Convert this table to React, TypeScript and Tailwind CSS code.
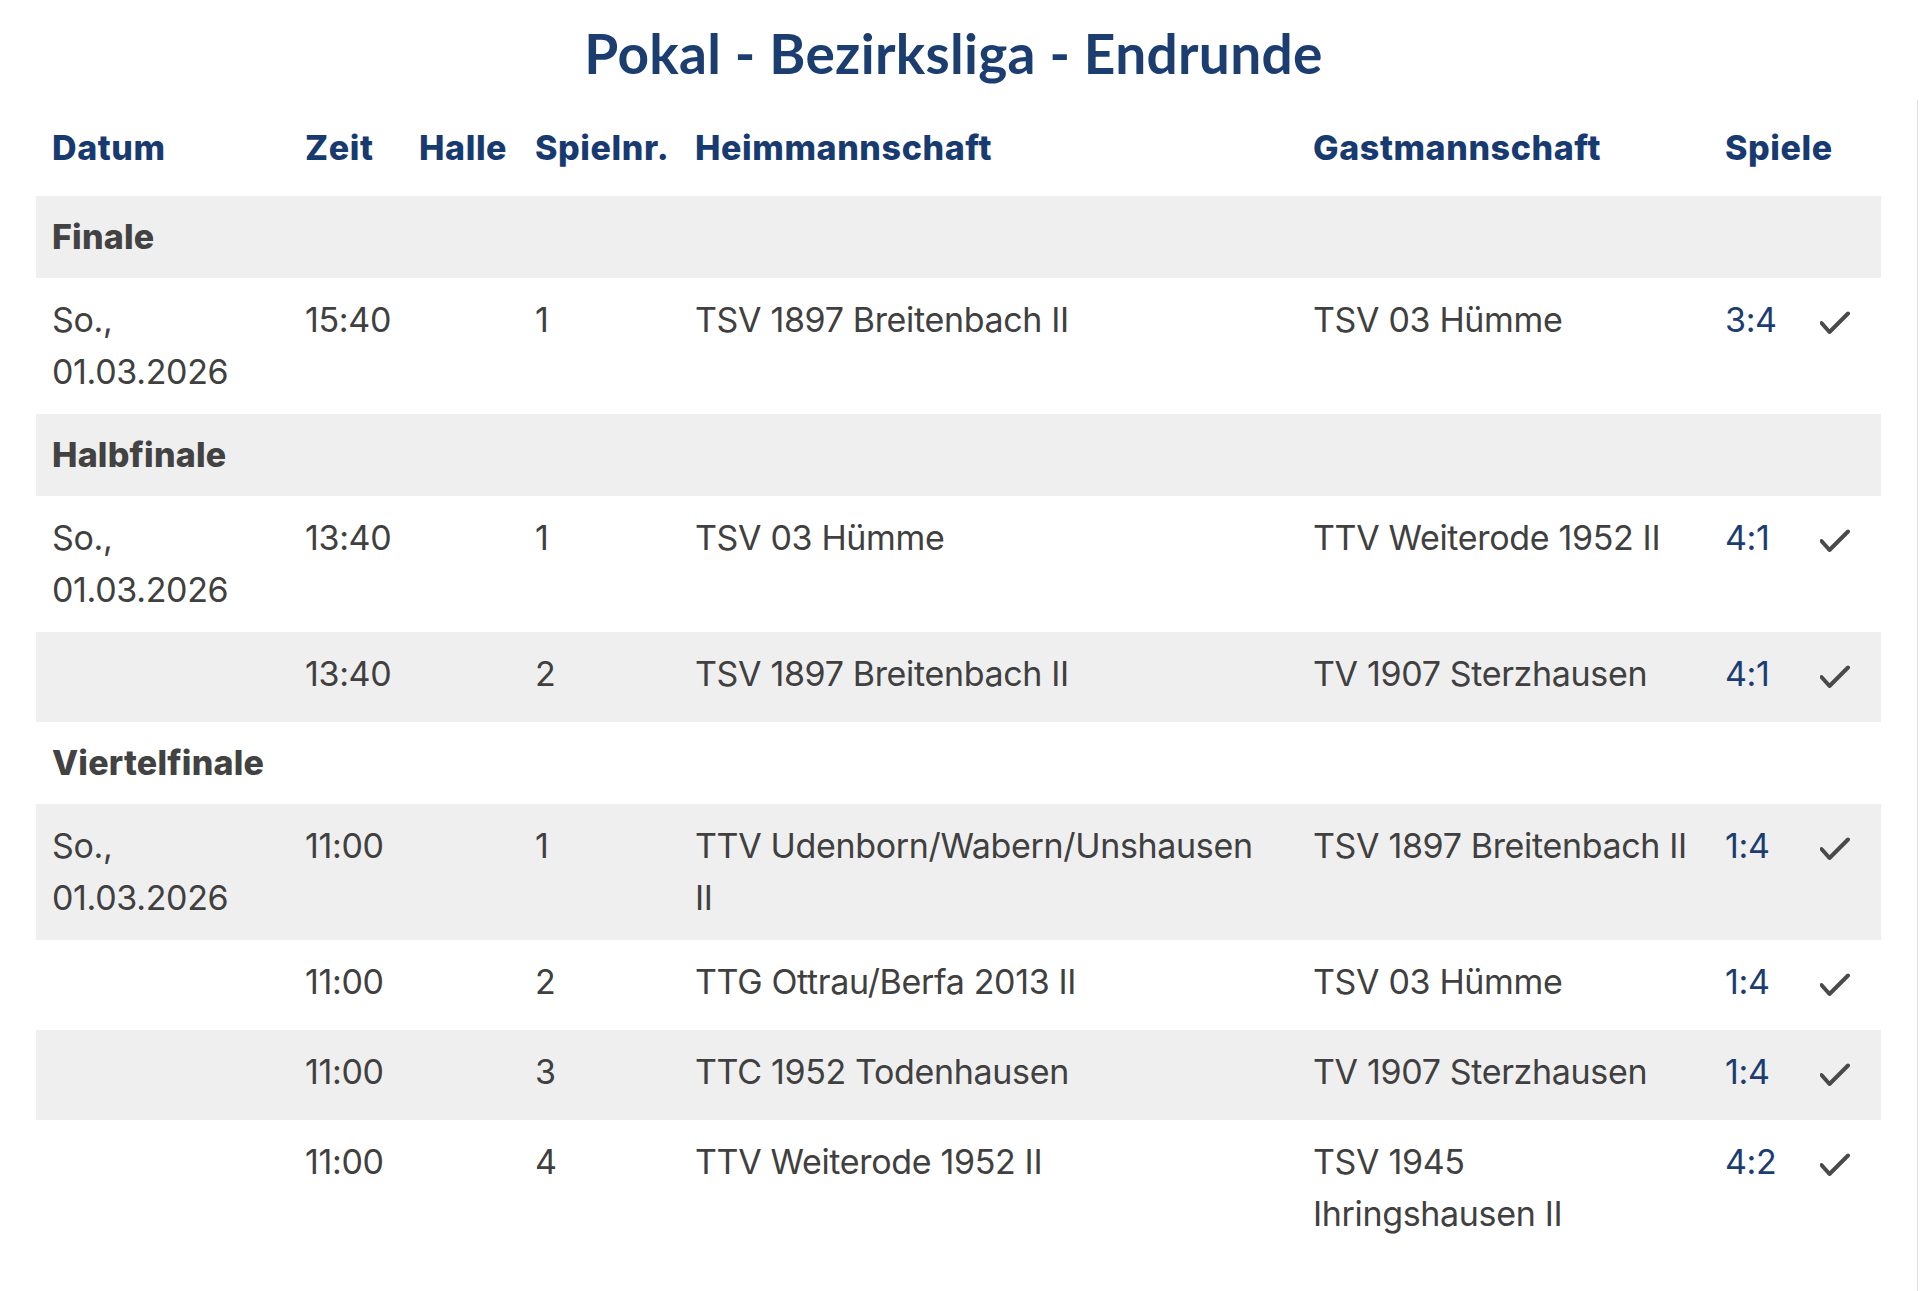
import React from "react";

type Match = {
  date?: string;
  time: string;
  nr: string;
  home: string;
  guest: string;
  score: string;
};

type Round = { name: string; matches: Match[] };

const rounds: Round[] = [
  {
    name: "Finale",
    matches: [
      { date: "So., 01.03.2026", time: "15:40", nr: "1", home: "TSV 1897 Breitenbach II", guest: "TSV 03 Hümme", score: "3:4" },
    ],
  },
  {
    name: "Halbfinale",
    matches: [
      { date: "So., 01.03.2026", time: "13:40", nr: "1", home: "TSV 03 Hümme", guest: "TTV Weiterode 1952 II", score: "4:1" },
      { time: "13:40", nr: "2", home: "TSV 1897 Breitenbach II", guest: "TV 1907 Sterzhausen", score: "4:1" },
    ],
  },
  {
    name: "Viertelfinale",
    matches: [
      { date: "So., 01.03.2026", time: "11:00", nr: "1", home: "TTV Udenborn/Wabern/Unshausen II", guest: "TSV 1897 Breitenbach II", score: "1:4" },
      { time: "11:00", nr: "2", home: "TTG Ottrau/Berfa 2013 II", guest: "TSV 03 Hümme", score: "1:4" },
      { time: "11:00", nr: "3", home: "TTC 1952 Todenhausen", guest: "TV 1907 Sterzhausen", score: "1:4" },
      { time: "11:00", nr: "4", home: "TTV Weiterode 1952 II", guest: "TSV 1945 Ihringshausen II", score: "4:2" },
    ],
  },
];

const GRID = "grid grid-cols-[253px_114px_116px_160px_618px_412px_97px_75px]";

function Check() {
  return (
    <svg width="30" height="24" viewBox="0 0 30 24" fill="none" stroke="#4a4a4a" strokeWidth="4" strokeLinecap="round" strokeLinejoin="round">
      <polyline points="1.5,12 9.5,21 28,2.5" />
    </svg>
  );
}

export default function App() {
  // flatten rounds into rows so the stripes alternate across the whole table
  const rows: ({ kind: "round"; name: string } | { kind: "match"; m: Match })[] = [];
  rounds.forEach((r) => {
    rows.push({ kind: "round", name: r.name });
    r.matches.forEach((m) => rows.push({ kind: "match", m }));
  });

  return (
    <div className="flex min-h-screen bg-white font-['Inter',sans-serif]">
      <div className="flex-1">
        <h1 className="h-[100px] pt-[20px] pr-[10px] text-center font-['Lato',sans-serif] text-[55px] font-bold leading-[1.2] tracking-[0.3px] text-[#1c3d70]">
          Pokal - Bezirksliga - Endrunde
        </h1>

        <div className="ml-[36px] w-[1845px] text-[34px] leading-[52px] tracking-[-0.01em]">
          <div className={`${GRID} py-[22px] font-extrabold tracking-[0.6px] text-[#173a70]`}>
            <div className="px-4">Datum</div>
            <div className="px-4">Zeit</div>
            <div className="px-4">Halle</div>
            <div className="px-4">Spielnr.</div>
            <div className="px-4">Heimmannschaft</div>
            <div className="px-4">Gastmannschaft</div>
            <div className="col-span-2 px-4">Spiele</div>
          </div>

          {rows.map((row, i) => {
            const bg = i % 2 === 0 ? "bg-[#efefef]" : "bg-white";
            if (row.kind === "round") {
              return (
                <div key={i} className={`${bg} px-4 py-[15px] font-extrabold tracking-[0.2px] text-[#424242]`}>
                  {row.name}
                </div>
              );
            }
            const m = row.m;
            return (
              <div key={i} className={`${GRID} ${bg} py-4 text-[#404040]`}>
                <div className="px-4">{m.date}</div>
                <div className="px-4">{m.time}</div>
                <div className="px-4"></div>
                <div className="px-4">{m.nr}</div>
                <div className="pl-4 pr-6">{m.home}</div>
                <div className="px-4">{m.guest}</div>
                <div className="px-4 text-[#1b3d72]">{m.score}</div>
                <div className="flex h-[58px] items-center pl-[14px]">
                  <Check />
                </div>
              </div>
            );
          })}
        </div>
      </div>
      <div className="mt-[100px] w-[3px] border-l border-[#e2e2e2]" />
    </div>
  );
}
